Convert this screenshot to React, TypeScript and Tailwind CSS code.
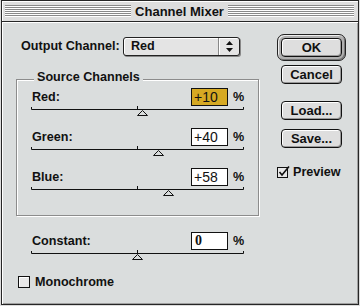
import React from 'react'

const ui = "font-['Liberation_Sans',Arial,sans-serif] font-bold text-[12.6px] text-[#111]"

function Slider({ value }: { value: number }) {
  const cx = Math.round(106 + (value / 200) * 106) + 0.5
  return (
    <svg width="214" height="10" className="block">
      <path d="M0.5 1 V3.5 H212.5 V1 M106.5 0 V3.5" stroke="#111" fill="none" />
      <path d={`M${cx} 4.5 L${cx + 5} 9.5 L${cx - 5} 9.5 Z`} stroke="#111" fill="#dadddd" />
    </svg>
  )
}

function Field({ text, selected, serif }: { text: string; selected?: boolean; serif?: boolean }) {
  return (
    <div
      className={
        selected
          ? "w-[37px] h-[18px] border border-[#111] bg-[#d6a923] pl-[2px] leading-[16px] font-normal text-[14px] font-['Liberation_Sans',Arial,sans-serif]"
          : serif
            ? "w-[37px] h-[18px] border border-[#111] bg-white pl-[3px] leading-[16px] font-bold text-[14px] font-['Liberation_Serif','Times_New_Roman',serif]"
            : "w-[37px] h-[18px] border border-[#111] bg-white pl-[2px] leading-[16px] font-normal text-[14px] font-['Liberation_Sans',Arial,sans-serif]"
      }
    >
      {text}
    </div>
  )
}

function Channel({ label, value, text, selected, serif, last }: {
  label: string; value: number; text: string; selected?: boolean; serif?: boolean; last?: boolean
}) {
  return (
    <div className={last ? '' : 'mb-[12px]'}>
      <div className="flex items-center h-[18px] w-[214px]">
        <span className="flex-1 pl-[1px] leading-[18px]">{label}</span>
        <Field text={text} selected={selected} serif={serif} />
        <span className="w-[12px] ml-[5px] leading-[18px]">%</span>
      </div>
      <Slider value={value} />
    </div>
  )
}

function Button({ children }: { children: React.ReactNode }) {
  return (
    <div className="w-[61px] h-[19px] rounded-[4px] border border-[#111] bg-[#dedede] shadow-[inset_1px_1px_0_#fff,inset_-1px_-1px_0_#999] flex items-center justify-center leading-none text-[13px]">
      {children}
    </div>
  )
}

function Stripes() {
  return (
    <div className="flex-1 flex flex-col">
      {[0, 1, 2, 3, 4, 5].map((i) => (
        <div key={i} className="h-[2px] border-t border-[#8a8a8a] bg-white" />
      ))}
    </div>
  )
}

export default function App() {
  return (
    <div className={`w-[360px] h-[306px] bg-[#dcdcdc] pl-[1px] ${ui}`}>
      <div className="w-[358px] h-[305px] border border-[#262626] flex flex-col">
        <div className="h-[21px] border-b border-[#262626] bg-[#dedede] shadow-[inset_1px_1px_0_#fff] flex items-center pl-[3px] pr-[4px]">
          <Stripes />
          <span className="px-[4px] text-[13px] leading-none">Channel Mixer</span>
          <Stripes />
        </div>
        <div className="flex-1 flex bg-[#dadddd] shadow-[inset_1px_1px_0_#fff,inset_-1px_-1px_0_#a0a0a0]">
          <div className="w-[243px] ml-[14px] mt-[15px]">
            <div className="flex items-center h-[19px] pl-[5px]">
              <span className="w-[102px]">Output Channel:</span>
              <div className="w-[117px] h-[19px] border border-[#222] rounded-[3px] bg-[#e4e4e4] shadow-[1px_1px_0_#888,inset_1px_1px_0_#fff] flex">
                <span className="flex-1 pl-[7px] leading-[17px]">Red</span>
                <div className="w-[21px] border-l border-[#888] flex items-center justify-center shadow-[inset_1px_0_0_#fff]">
                  <svg width="7" height="11">
                    <path d="M3.5 0 L7 4 L0 4 Z M0 7 L7 7 L3.5 11 Z" fill="#111" />
                  </svg>
                </div>
              </div>
            </div>
            <div className="relative mt-[23px] border border-[#8c8c8c] shadow-[inset_1px_1px_0_#fff,1px_1px_0_#fff] pt-[8px] pb-[7px] pl-[14px]">
              <span className="absolute left-[17px] top-[-10px] px-[3px] bg-[#dadddd] leading-[14px]">
                Source Channels
              </span>
              <Channel label="Red:" value={10} text="+10" selected />
              <Channel label="Green:" value={40} text="+40" />
              <Channel label="Blue:" value={58} text="+58" />
            </div>
            <div className="mt-[16px] pl-[15px]">
              <Channel label="Constant:" value={0} text="0" serif last />
            </div>
            <div className="mt-[16px] pl-[2px] flex items-center h-[12px]">
              <svg width="12" height="12" className="block">
                <rect x="0.5" y="0.5" width="11" height="11" fill="#e8e8e8" stroke="#111" />
                <path d="M1.5 10.5 V1.5 H10.5" stroke="#fff" fill="none" />
              </svg>
              <span className="ml-[5px] leading-none">Monochrome</span>
            </div>
          </div>
          <div className="ml-[18px] mt-[12px] flex flex-col">
            <div className="w-[69px] rounded-[7px] border border-[#222] bg-[#b0b0b0] shadow-[inset_1px_1px_0_#eee,inset_-1px_-1px_0_#777] p-[3px]">
              <Button>OK</Button>
            </div>
            <div className="ml-[4px] mt-[4px]">
              <Button>Cancel</Button>
            </div>
            <div className="ml-[4px] mt-[17px]">
              <Button>Load...</Button>
            </div>
            <div className="ml-[4px] mt-[9px]">
              <Button>Save...</Button>
            </div>
            <div className="mt-[18px] flex items-center h-[12px]">
              <svg width="13" height="12" className="block">
                <rect x="0.5" y="1.5" width="10" height="10" fill="#e8e8e8" stroke="#111" />
                <path d="M2.5 6 L5 9 L12 0.5" stroke="#111" strokeWidth="1.6" fill="none" />
              </svg>
              <span className="ml-[3px] leading-none">Preview</span>
            </div>
          </div>
        </div>
      </div>
    </div>
  )
}
